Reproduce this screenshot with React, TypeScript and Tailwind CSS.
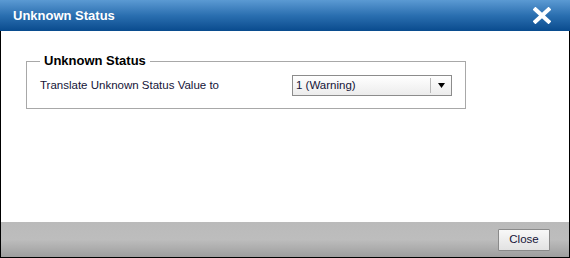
import React from "react";

export default function App() {
  const font = { fontFamily: '"Liberation Sans", Arial, sans-serif' };
  return (
    <div className="w-[570px] h-[258px] flex flex-col bg-white" style={font}>
      <div className="h-[31px] shrink-0 flex items-center justify-between pl-[13px] pr-[19px] bg-gradient-to-b from-[#5b9ad3] via-[#2a6fb0] to-[#084b8e]">
        <span className="text-white font-bold text-[13px] leading-none">Unknown Status</span>
        <svg width="18" height="17" viewBox="0 0 18 17">
          <path d="M2.5 2.5 L15.5 14.5 M15.5 2.5 L2.5 14.5" stroke="#ffffff" strokeWidth="4" strokeLinecap="square" />
        </svg>
      </div>
      <div className="flex-1 flex flex-col border-x border-b border-black">
        <div className="flex-1 bg-white pt-[22px] pl-[25px]">
          <fieldset className="w-[439px] h-[56px] border border-[#a8a8a8] px-[13px]">
            <legend className="px-[4px] text-[13px] leading-[16px] font-bold text-black">Unknown Status</legend>
            <div className="flex items-center mt-[6px]">
              <span className="w-[252px] text-[11.5px] text-[#141438]">Translate Unknown Status Value to</span>
              <div className="w-[160px] h-[21px] flex items-center border border-[#8c8c8c] bg-gradient-to-b from-[#ffffff] to-[#ececec]">
                <span className="flex-1 pl-[3px] text-[11.5px] text-[#141438]">1 (Warning)</span>
                <div className="w-px h-[15px] bg-[#b8b8b8]" />
                <div className="w-[20px] flex items-center justify-center">
                  <svg width="7" height="5" viewBox="0 0 7 5">
                    <path d="M0 0 H7 L3.5 5 Z" fill="#000" />
                  </svg>
                </div>
              </div>
            </div>
          </fieldset>
        </div>
        <div className="h-[35px] shrink-0 flex items-center justify-end pr-[19px] bg-gradient-to-b from-[#bababa] via-[#bdbdbd] to-[#9e9e9e]">
          <button className="w-[52px] h-[22px] border border-[#8a8a8a] bg-gradient-to-b from-[#f8f8f8] to-[#e2e2e2] text-[11.5px] text-[#141438] rounded-[1px]">Close</button>
        </div>
      </div>
    </div>
  );
}
